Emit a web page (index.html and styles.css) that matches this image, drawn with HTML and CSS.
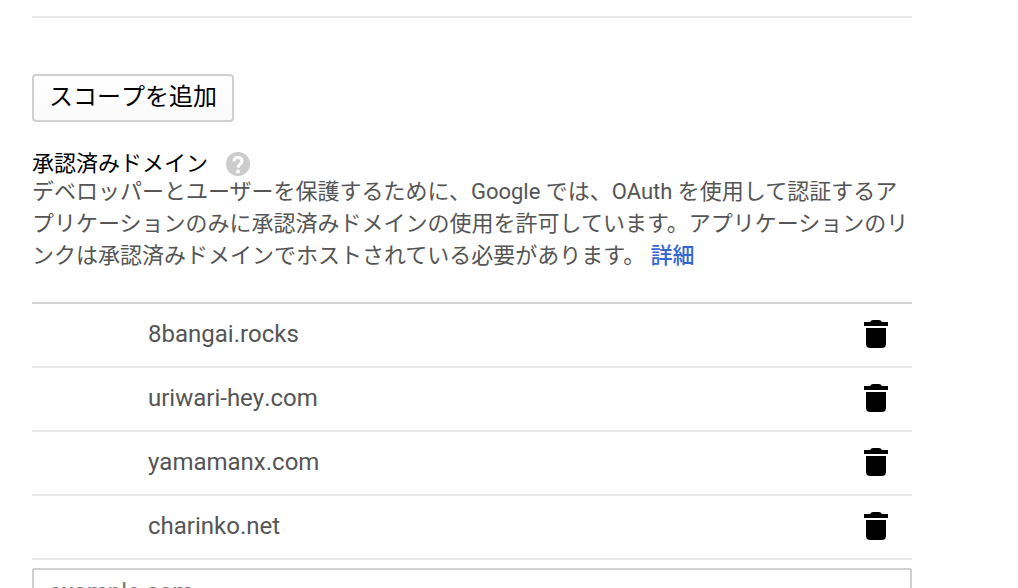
FILE: index.html
```html
<!DOCTYPE html>
<html lang="ja">
<head>
<meta charset="utf-8">
<meta name="viewport" content="width=device-width, initial-scale=1">
<title>承認済みドメイン</title>
<link rel="stylesheet" href="styles.css">
</head>
<body>
<svg class="symbols" aria-hidden="true">
  <symbol id="trash" viewBox="0 0 24 28">
    <path d="M0 2H6Q7 0 9 0H15Q17 0 18 2H24V6H0ZM2 8H22V24Q22 28 18 28H6Q2 28 2 24Z"/>
  </symbol>
</svg>
<main class="page">
  <hr class="divider">
  <button class="add-scope" type="button">スコープを追加</button>
  <section>
    <div class="heading">
      <h2 class="title" id="domains-title">承認済みドメイン</h2>
      <button class="help" type="button" aria-label="ヘルプ">
        <svg class="help-icon" viewBox="0 0 24 24" aria-hidden="true">
          <circle class="help-disc" cx="12" cy="12" r="12"/>
          <path class="help-hook" d="M8 9.500C8 6.900 9.500 5.600 12 5.600S16 7 16 9.200C16 12 12.200 12 12.200 15.800"/>
          <circle class="help-dot" cx="12" cy="19.500" r="2"/>
        </svg>
      </button>
    </div>
    <p class="description">デベロッパーとユーザーを保護するために、Google では、OAuth を使用して認証するアプリケーションのみに承認済みドメインの使用を許可しています。アプリケーションのリンクは承認済みドメインでホストされている必要があります。 <a class="link" href="#">詳細</a></p>
    <table class="domains" aria-labelledby="domains-title">
      <tbody>
        <tr><td class="domain">8bangai.rocks</td><td class="action"><button class="delete" type="button" aria-label="8bangai.rocks を削除"><svg class="trash" aria-hidden="true"><use href="#trash"/></svg></button></td></tr>
        <tr><td class="domain">uriwari-hey.com</td><td class="action"><button class="delete" type="button" aria-label="uriwari-hey.com を削除"><svg class="trash" aria-hidden="true"><use href="#trash"/></svg></button></td></tr>
        <tr><td class="domain">yamamanx.com</td><td class="action"><button class="delete" type="button" aria-label="yamamanx.com を削除"><svg class="trash" aria-hidden="true"><use href="#trash"/></svg></button></td></tr>
        <tr><td class="domain">charinko.net</td><td class="action"><button class="delete" type="button" aria-label="charinko.net を削除"><svg class="trash" aria-hidden="true"><use href="#trash"/></svg></button></td></tr>
      </tbody>
    </table>
    <input class="domain-input" type="text" placeholder="example.com" aria-labelledby="domains-title">
  </section>
</main>
</body>
</html>
```
FILE: styles.css
```css
* {
  box-sizing: border-box;
}

body {
  margin: 0;
  background: #fff;
  color: #000;
  font-family: Roboto, "Noto Sans CJK JP", sans-serif;
  font-size: 24px;
  font-kerning: none;
}

button,
input {
  font: inherit;
  font-kerning: none;
}

.symbols {
  display: none;
}

.page {
  padding: 16px 106px 0 32px;
}

.divider {
  height: 2px;
  margin: 0 0 56px;
  border: 0;
  background: #ebebeb;
}

.add-scope {
  display: block;
  height: 48px;
  padding: 0 15px 2px;
  border: 2px solid #d0d0d0;
  border-radius: 4px;
  background: linear-gradient(#fff, #fafafa);
  color: #000;
  line-height: 32px;
}

.heading {
  display: flex;
  align-items: center;
  gap: 18px;
  height: 24px;
  margin-top: 30px;
}

.title {
  margin: 0;
  font-size: 22px;
  font-weight: 400;
  line-height: 24px;
}

.help,
.delete {
  display: flex;
  padding: 0;
  border: 0;
  background: none;
  cursor: pointer;
}

.help-icon {
  width: 24px;
  height: 24px;
}

.help-disc {
  fill: #ccc;
}

.help-hook {
  fill: none;
  stroke: #fff;
  stroke-width: 3;
}

.help-dot {
  fill: #fff;
}

.description {
  margin: 0;
  color: #555;
  font-size: 22px;
  font-kerning: auto;
  line-height: 32px;
}

.link {
  color: #3367d6;
  font-weight: 500;
  text-decoration: none;
}

.domains {
  width: 100%;
  margin-top: 30px;
  border-top: 2px solid #d4d4d4;
  border-spacing: 0;
  color: #555;
}

.domain,
.action {
  height: 64px;
  padding: 0 0 2px;
  border-bottom: 2px solid #ebebeb;
  vertical-align: middle;
}

.domain {
  padding-left: 116px;
}

.action {
  width: 48px;
}

.trash {
  width: 24px;
  height: 28px;
  fill: #000;
}

.domain-input {
  display: block;
  width: 100%;
  height: 48px;
  margin-top: 8px;
  padding: 0 15px;
  border: 2px solid #d0d0d0;
  border-radius: 2px;
  background: #fff;
  color: #555;
}

.domain-input::placeholder {
  color: #757575;
}
```
